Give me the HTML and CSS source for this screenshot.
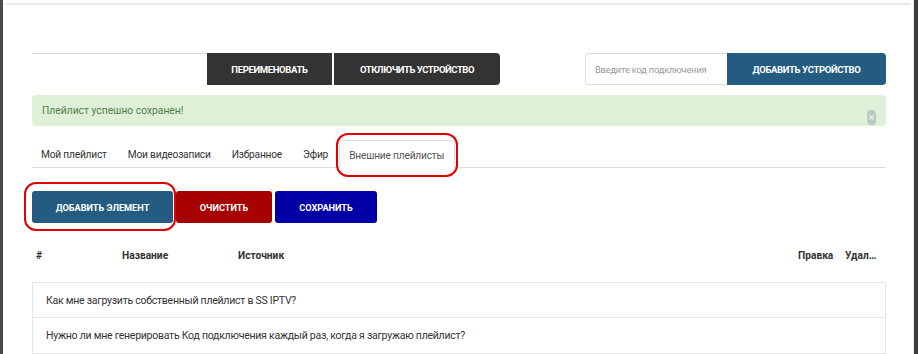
FILE: index.html
```html
<!DOCTYPE html>
<html lang="ru">
<head>
<meta charset="utf-8">
<title>Плейлист</title>
<link rel="stylesheet" href="styles.css">
</head>
<body>
<div class="frame">
  <div class="edge-left"></div>
  <main class="page">
    <div class="topline"></div>
    <section class="device-bar">
      <div class="device-spacer"></div>
      <button class="btn btn-dark btn-narrow">ПЕРЕИМЕНОВАТЬ</button>
      <button class="btn btn-dark btn-narrow btn-round-right btn-disconnect">ОТКЛЮЧИТЬ УСТРОЙСТВО</button>
      <div class="grow"></div>
      <input class="code-input" type="text" placeholder="Введите код подключения">
      <button class="btn btn-blue btn-narrow btn-round-right btn-add-device">ДОБАВИТЬ УСТРОЙСТВО</button>
    </section>
    <div class="alert">
      <span>Плейлист успешно сохранен!</span>
      <svg class="alert-close" width="9" height="15" viewBox="0 0 9 15"><rect x="0" y="0" width="9" height="15" rx="4" fill="#b7ccc0"/><path d="M2.5 5.5l4 4M6.5 5.5l-4 4" stroke="#e6f0e8" stroke-width="1.4"/></svg>
    </div>
    <nav class="tabs">
      <a class="tab">Мой плейлист</a>
      <a class="tab">Мои видеозаписи</a>
      <a class="tab">Избранное</a>
      <a class="tab">Эфир</a>
      <a class="tab tab-active">Внешние плейлисты<span class="mark mark-tab"></span></a>
    </nav>
    <div class="actions">
      <button class="btn btn-blue btn-action btn-add">ДОБАВИТЬ ЭЛЕМЕНТ<span class="mark mark-btn"></span></button>
      <button class="btn btn-red btn-action btn-clear">ОЧИСТИТЬ</button>
      <button class="btn btn-navy btn-action btn-save">СОХРАНИТЬ</button>
    </div>
    <div class="thead">
      <span class="th th-num">#</span>
      <span class="th th-name">Название</span>
      <span class="th th-src">Источник</span>
      <span class="grow"></span>
      <span class="th th-edit">Правка</span>
      <span class="th th-del">Удал…</span>
    </div>
    <div class="faq">
      <div class="faq-item">Как мне загрузить собственный плейлист в SS IPTV?</div>
      <div class="faq-item">Нужно ли мне генерировать Код подключения каждый раз, когда я загружаю плейлист?</div>
    </div>
  </main>
  <div class="edge-right"></div>
</div>
</body>
</html>
```
FILE: styles.css
```css
* { box-sizing: border-box; }
html, body { margin: 0; padding: 0; height: 100%; background: #fff; overflow: hidden; }
body { font-family: Roboto, "Noto Sans", sans-serif; color: #333; }

.frame { display: flex; height: 354px; }
.edge-left { width: 3px; background: #494949; flex: none; }
.edge-right { width: 5px; background: #3d3d3d; flex: none; border-left: 1px solid #e6e6e6; }
.page { flex: 1; padding: 0 27px 0 29px; position: relative; }
.topline { height: 2px; margin: 3px -25px 0 -27px; background: #ebebeb; }

.device-bar { display: flex; align-items: stretch; height: 32px; margin-top: 48px; }
.device-spacer { width: 175px; border-top: 1px solid #ddd; }
.grow { flex: 1; }

.btn { border: none; color: #fff; font-family: Roboto, sans-serif; font-weight: 700; padding: 0; cursor: pointer; display: flex; align-items: center; justify-content: center; }
.btn-narrow { font-size: 9.5px; letter-spacing: -0.35px; }
.btn-dark { background: #333; width: 125px; }
.btn-disconnect { width: 166px; margin-left: 2px; letter-spacing: -0.45px; }
.btn-round-right { border-radius: 0 4px 4px 0; }
.btn-blue { background: #245b80; }
.btn-add-device { width: 159px; }
.code-input { width: 142px; border: 1px solid #ddd; border-right: none; border-radius: 4px 0 0 4px; padding: 0 9px; font-family: Roboto, sans-serif; font-size: 9.3px; color: #555; outline: none; }
.code-input::placeholder { color: #999; letter-spacing: -0.2px; }

.alert { height: 31px; margin-top: 10px; background: #dff0d8; border-radius: 4px; color: #4f7d4d; font-size: 10.3px; padding: 0 10px; display: flex; align-items: center; position: relative; }
.alert-close { position: absolute; right: 10px; top: 15px; }

.tabs { display: flex; margin-top: 14px; border-bottom: 1px solid #ddd; height: 28px; }
.tab { font-size: 10.2px; letter-spacing: -0.2px; color: #333; padding: 0 9.5px; display: flex; align-items: center; border: 1px solid transparent; border-bottom: none; position: relative; white-space: nowrap; }
.tab:first-child { padding-left: 8px; }
.tab-active { border-color: #ddd; border-radius: 4px 4px 0 0; background: #fff; height: 29px; color: #555; }

.mark { position: absolute; border: 2px solid #e00000; pointer-events: none; }
.mark-tab { left: -4px; right: -4px; top: -8px; bottom: -8px; border-radius: 12px; }
.mark-btn { left: -8px; right: -3px; top: -9px; bottom: -8px; border-radius: 12px; }

.actions { display: flex; gap: 3px; margin-top: 23px; }
.btn-action { height: 32px; border-radius: 3px; font-size: 9.2px; position: relative; }
.btn-add { width: 141px; }
.btn-red { background: #a60000; }
.btn-clear { width: 96px; }
.btn-navy { background: #0000a6; }
.btn-save { width: 102px; }

.thead { display: flex; align-items: center; height: 20px; margin-top: 22px; font-size: 10.2px; font-weight: 700; }
.th { white-space: nowrap; }
.th-num { width: 90px; padding-left: 4px; }
.th-name { width: 116px; }
.th-edit { width: 47px; }
.th-del { width: 33px; margin-right: 8px; }

.faq { margin-top: 17px; }
.faq-item { height: 36px; border: 1px solid #e6e6e6; border-top: none; padding: 0 13px; display: flex; align-items: center; font-size: 10.5px; letter-spacing: -0.25px; color: #333; }
.faq-item:first-child { border-top: 1px solid #e6e6e6; }
```
